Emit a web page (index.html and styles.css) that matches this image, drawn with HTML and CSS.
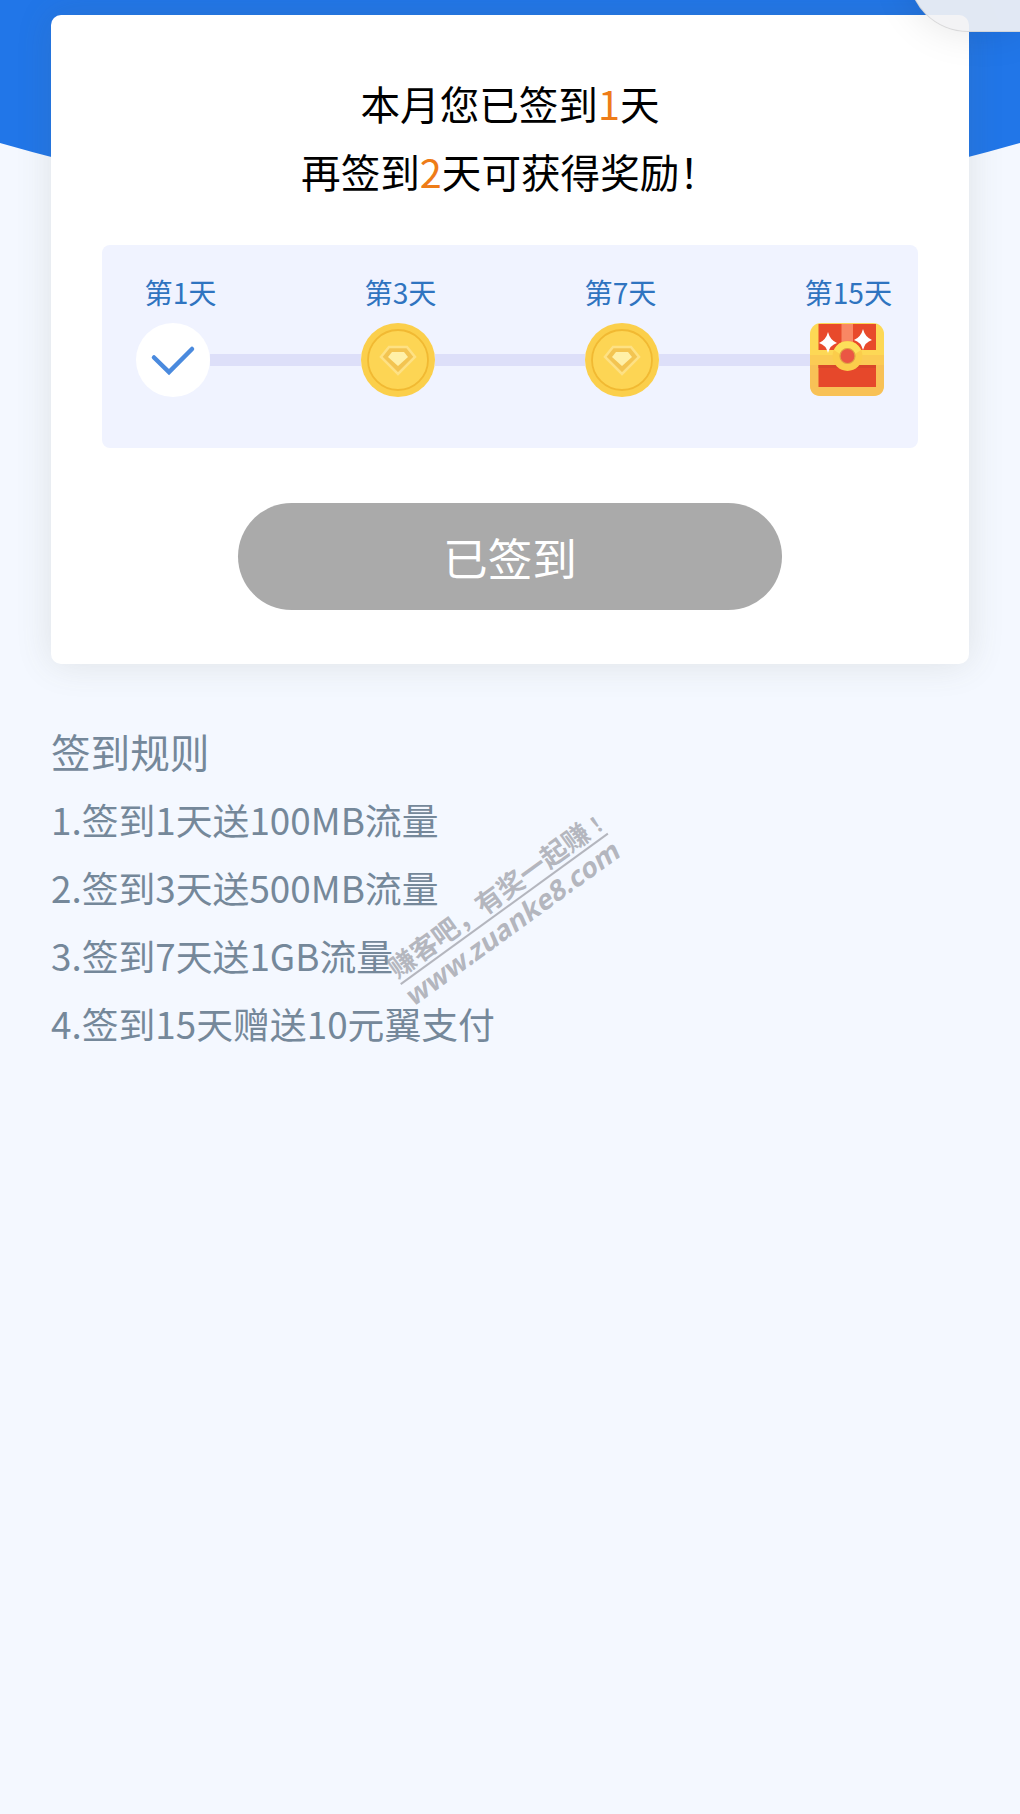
FILE: index.html
```html
<!DOCTYPE html>
<html lang="zh-CN">
<head>
<meta charset="utf-8">
<title>签到</title>
<link rel="stylesheet" href="styles.css">
</head>
<body>
<svg class="hero" viewBox="0 0 1020 220" aria-hidden="true"><path d="M0 0H1020V143Q510 290 0 143Z" fill="#2176e8"/></svg>
<main class="page">
  <section class="card">
    <p class="summary">本月您已签到<em>1</em>天</p>
    <p class="summary">再签到<em>2</em>天可获得奖励！</p>
    <div class="progress">
      <div class="labels"><span>第1天</span><span>第3天</span><span>第7天</span><span>第15天</span></div>
      <div class="steps">
        <svg class="icon" viewBox="0 0 74 74"><circle cx="37" cy="37" r="37" fill="#fff"/><path d="M18 34.500L33 49L56 26" fill="none" stroke="#4a8ade" stroke-width="4.500" stroke-linecap="round"/></svg>
        <i class="track"></i>
        <svg class="icon" viewBox="0 0 74 74"><use href="#coin"/></svg>
        <i class="track"></i>
        <svg class="icon" viewBox="0 0 74 74">
          <g id="coin">
            <circle cx="37" cy="37" r="37" fill="#fbcf4b"/>
            <circle cx="37" cy="37" r="30" fill="#fdd554" stroke="#f1b932" stroke-width="1.800"/>
            <path d="M28 24H46L54 34L37 51L20 34Z" fill="#f3c451" stroke="#fee183" stroke-width="2.500"/>
            <path d="M31 29H43L47 34L37 43L27 34Z" fill="#fff0a8"/>
          </g>
        </svg>
        <i class="track"></i>
        <svg class="icon" viewBox="0 0 74 74">
          <rect width="74" height="73" rx="11" fill="#fdd855"/>
          <path d="M0 32H74V62Q74 73 63 73H11Q0 73 0 62Z" fill="#f8c156"/>
          <rect y="32" width="74" height="10" fill="#fbcb54"/>
          <path d="M8.500 1H66V27H8.500Z" fill="#e84a2b"/>
          <path d="M8.500 42H66V64H8.500Z" fill="#e6482b"/>
          <path d="M8.500 42H66V45H8.500Z" fill="#d9452a"/>
          <path d="M31.500 1H43V25H31.500Z" fill="#f98764"/>
          <path d="M18 9Q20 17 27 20Q20 22 18 30Q16 22 9 20Q16 17 18 9ZM53 6Q55 14 62 17Q55 19 53 27Q51 19 44 17Q51 14 53 6Z" fill="#fff"/>
          <circle cx="37.500" cy="33" r="15" fill="#fbcd4b"/>
          <path d="M24 27A15 15 0 0 1 51 27L45 31A8 8 0 0 0 30 31Z" fill="#fde05a"/>
          <circle cx="37.500" cy="33" r="7.500" fill="#eb5644" stroke="#e0a344" stroke-width="1.200"/>
        </svg>
      </div>
    </div>
    <button class="done" type="button">已签到</button>
  </section>
  <section class="rules">
    <h2>签到规则</h2>
    <p>1.签到1天送100MB流量</p>
    <p>2.签到3天送500MB流量</p>
    <p>3.签到7天送1GB流量</p>
    <p>4.签到15天赠送10元翼支付</p>
  </section>
</main>
<div class="floating"></div>
<div class="watermark"><div class="slogan">赚客吧，有奖一起赚<span class="mark" lang="zh-TW">！</span></div><div class="site">www.zuanke8.com</div></div>
</body>
</html>
```
FILE: styles.css
```css
* { box-sizing: border-box; }
body {
  margin: 0;
  position: relative;
  width: 1020px;
  height: 1814px;
  overflow: hidden;
  background: #f4f8ff;
  font-family: "Noto Sans CJK SC", sans-serif;
}
p, h2 { margin: 0; font-weight: 400; }
.hero { position: absolute; top: 0; left: 0; width: 1020px; height: 220px; }
.page { position: relative; padding: 15px 51px 0; }
.card {
  height: 648.500px;
  padding: 54px 51px 0;
  border-radius: 10px;
  background: #fff;
  box-shadow: 0 0 36px rgba(90, 90, 70, .14);
  display: flex;
  flex-direction: column;
}
.summary { font-size: 39.600px; line-height: 68px; text-align: center; color: #000; }
.summary em { font-style: normal; color: #ee7c18; }
.progress {
  height: 203.500px;
  margin-top: 39.500px;
  padding: 26.500px 34px 0;
  border-radius: 8px;
  background: #f0f3ff;
}
.labels {
  display: grid;
  grid-template-columns: repeat(4, 220px);
  width: 748px;
  padding-left: 8.500px;
  height: 52px;
  font-size: 28.200px;
  line-height: 42px;
  color: #2f74c0;
}
.labels span { white-space: nowrap; }
.steps { display: flex; align-items: center; width: 748px; }
.icon { width: 74px; height: 74px; flex: none; }
.track { flex: 1; height: 12px; background: #dddff9; }
.done {
  align-self: center;
  width: 544px;
  height: 107.500px;
  margin-top: 54.500px;
  padding: 3px 0 0;
  border: 0;
  border-radius: 54px;
  background: #aaa;
  color: #fff;
  font: 44.600px/1 "Noto Sans CJK SC", sans-serif;
}
.rules { padding-top: 53.500px; color: #75889a; }
.rules h2 { font-size: 39.600px; line-height: 68px; }
.rules p { font-size: 36.850px; line-height: 68px; }
.floating {
  position: absolute;
  top: 0;
  right: 0;
  width: 112px;
  height: 31px;
  clip-path: inset(0 0 -60px -60px);
}
.floating::before {
  content: "";
  position: absolute;
  top: -89px;
  left: 0;
  width: 112px;
  height: 120px;
  border-radius: 0 0 0 60px;
  background: rgba(242, 242, 244, .92);
  border: solid rgba(200, 200, 200, .6);
  border-width: 0 0 1px 1px;
  box-shadow: 0 0 40px rgba(0, 0, 0, .1);
}
.watermark {
  position: absolute;
  left: 364px;
  top: 877px;
  width: 280px;
  padding: 0 12px;
  color: rgba(155, 157, 165, .72);
  transform: rotate(-36deg);
  white-space: nowrap;
}
.slogan { height: 33px; border-bottom: 2px solid; font-size: 26.800px; line-height: 30px; font-weight: 700; }
.mark { font-family: "Noto Sans CJK TC", sans-serif; font-size: 22px; }
.site {
  margin-left: -2px;
  font: 700 27.500px/30px "Noto Sans", sans-serif;
  transform: skewX(-12deg);
}
```
